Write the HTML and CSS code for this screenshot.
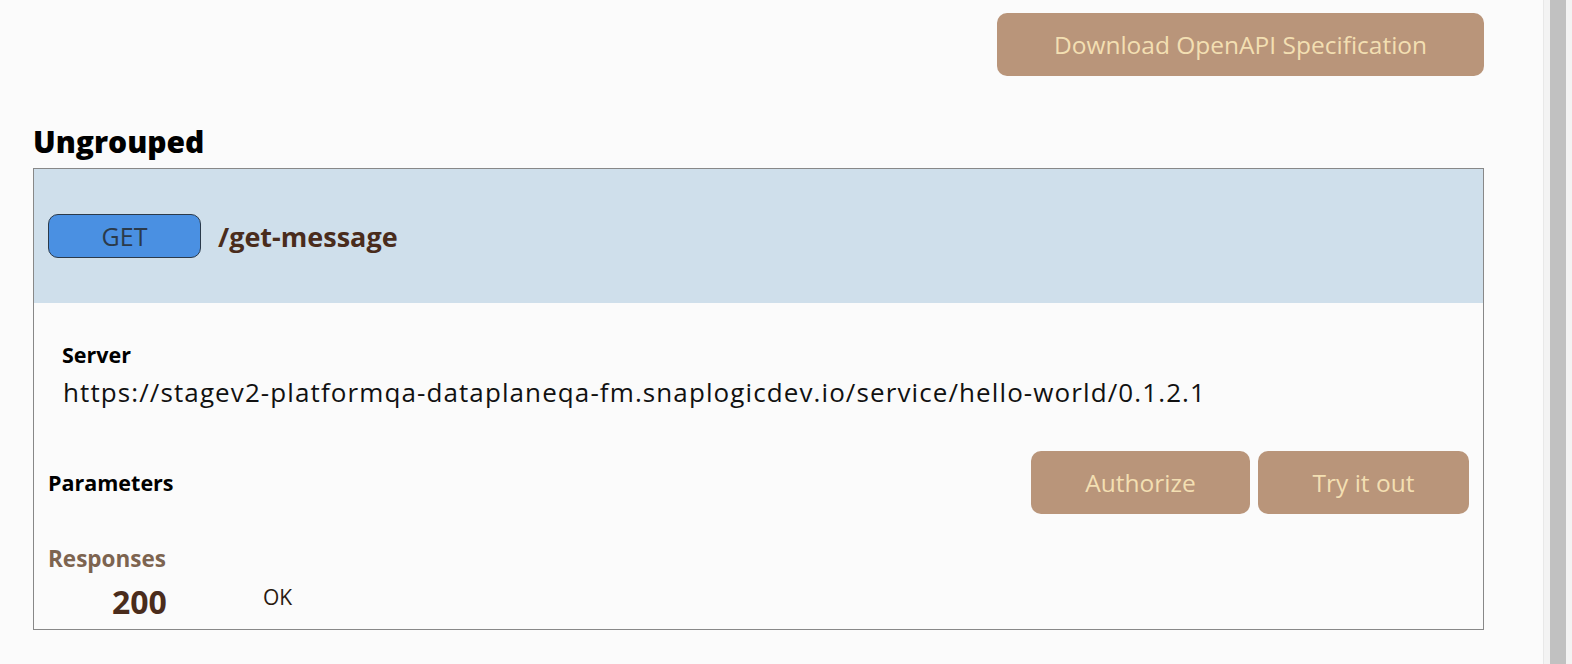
FILE: index.html
```html
<!DOCTYPE html>
<html lang="en">
<head>
    <meta charset="UTF-8">
    <meta name="viewport" content="width=device-width, initial-scale=1.0">
    <title>hello-world - API Docs</title>
    <link rel="stylesheet" href="styles.css">
</head>
<body>
    <div class="page">
        <div class="toolbar">
            <button class="btn btn-download">Download OpenAPI Specification</button>
        </div>

        <h2 class="group-title">Ungrouped</h2>

        <!-- Endpoint card -->
        <div class="endpoint">
            <div class="endpoint-head">
                <span class="method">GET</span>
                <span class="path">/get-message</span>
            </div>

            <div class="endpoint-body">
                <div class="server">
                    <div class="server-label">Server</div>
                    <div class="server-url">https://stagev2-platformqa-dataplaneqa-fm.snaplogicdev.io/service/hello-world/0.1.2.1</div>
                </div>

                <div class="params-row">
                    <div class="params-title">Parameters</div>
                    <div class="actions">
                        <button class="btn btn-auth">Authorize</button>
                        <button class="btn btn-try">Try it out</button>
                    </div>
                </div>

                <div class="responses">
                    <div class="responses-title">Responses</div>
                    <div class="response-row">
                        <span class="code">200</span>
                        <span class="desc">OK</span>
                    </div>
                </div>
            </div>
        </div>
    </div>

    <div class="scrollbar"><div class="thumb"></div></div>
</body>
</html>
```

FILE: styles.css
```css
html, body {
    height: 100%;
}
body {
    margin: 0;
    display: flex;
    font-family: "Open Sans", "Noto Sans", sans-serif;
    background-color: #fbfbfb;
    color: #111;
    overflow: hidden;
}
.page {
    flex: 1;
    padding: 0 59px 0 33px;
}
.toolbar {
    display: flex;
    justify-content: flex-end;
    padding-top: 13px;
}
.btn {
    font-family: inherit;
    background-color: #b9957a;
    color: #f3dfb2;
    border: none;
    border-radius: 10px;
    cursor: pointer;
    font-size: 24.5px;
    height: 63px;
    padding: 0;
}
.btn:hover {
    background-color: #a8846a;
}
.btn-download {
    width: 487px;
}
.group-title {
    margin: 47px 0 7px;
    font-size: 30px;
    font-weight: 800;
    line-height: 38px;
    color: #000;
}
.endpoint {
    border: 1px solid #888;
    background: #fbfbfb;
}
.endpoint-head {
    display: flex;
    align-items: center;
    height: 134px;
    padding-left: 14px;
    background-color: #cfdfeb;
}
.method {
    display: inline-block;
    width: 151px;
    height: 42px;
    line-height: 42px;
    text-align: center;
    background-color: #4a90e2;
    border: 1px solid #2b3a4a;
    border-radius: 10px;
    color: #2b3a4a;
    font-size: 25px;
}
.path {
    margin-left: 17px;
    font-size: 27px;
    font-weight: 700;
    color: #4a2c1c;
}
.endpoint-body {
    padding: 38px 14px 7px;
}
.server {
    padding-left: 14px;
}
.server-label {
    font-size: 21.5px;
    font-weight: 700;
    line-height: 28px;
    color: #000;
}
.server-url {
    margin: 5px 0 0 1px;
    font-size: 26px;
    line-height: 36px;
    letter-spacing: 1.1px;
}
.params-row {
    display: flex;
    justify-content: space-between;
    align-items: center;
    margin-top: 41px;
}
.params-title {
    font-size: 21.5px;
    font-weight: 700;
    color: #000;
}
.actions {
    display: flex;
    gap: 8px;
}
.btn-auth {
    width: 219px;
}
.btn-try {
    width: 211px;
}
.responses {
    padding-top: 31px;
}
.responses-title {
    font-size: 22.5px;
    font-weight: 700;
    color: #7d6450;
    line-height: 28px;
}
.response-row {
    display: flex;
    align-items: flex-start;
    margin-top: 9px;
}
.code {
    width: 151px;
    padding-left: 64px;
    font-size: 32px;
    font-weight: 700;
    line-height: 40px;
    color: #4a2c1c;
}
.desc {
    margin-top: 2px;
    font-size: 21px;
    line-height: 26px;
    color: #2a1a10;
}
.scrollbar {
    width: 29px;
    flex-shrink: 0;
    background-color: #f3f3f3;
    border-left: 1px solid #e8e8e8;
    box-sizing: border-box;
    padding-left: 6px;
}
.thumb {
    width: 16px;
    height: 100%;
    background-color: #c1c1c1;
}
```
